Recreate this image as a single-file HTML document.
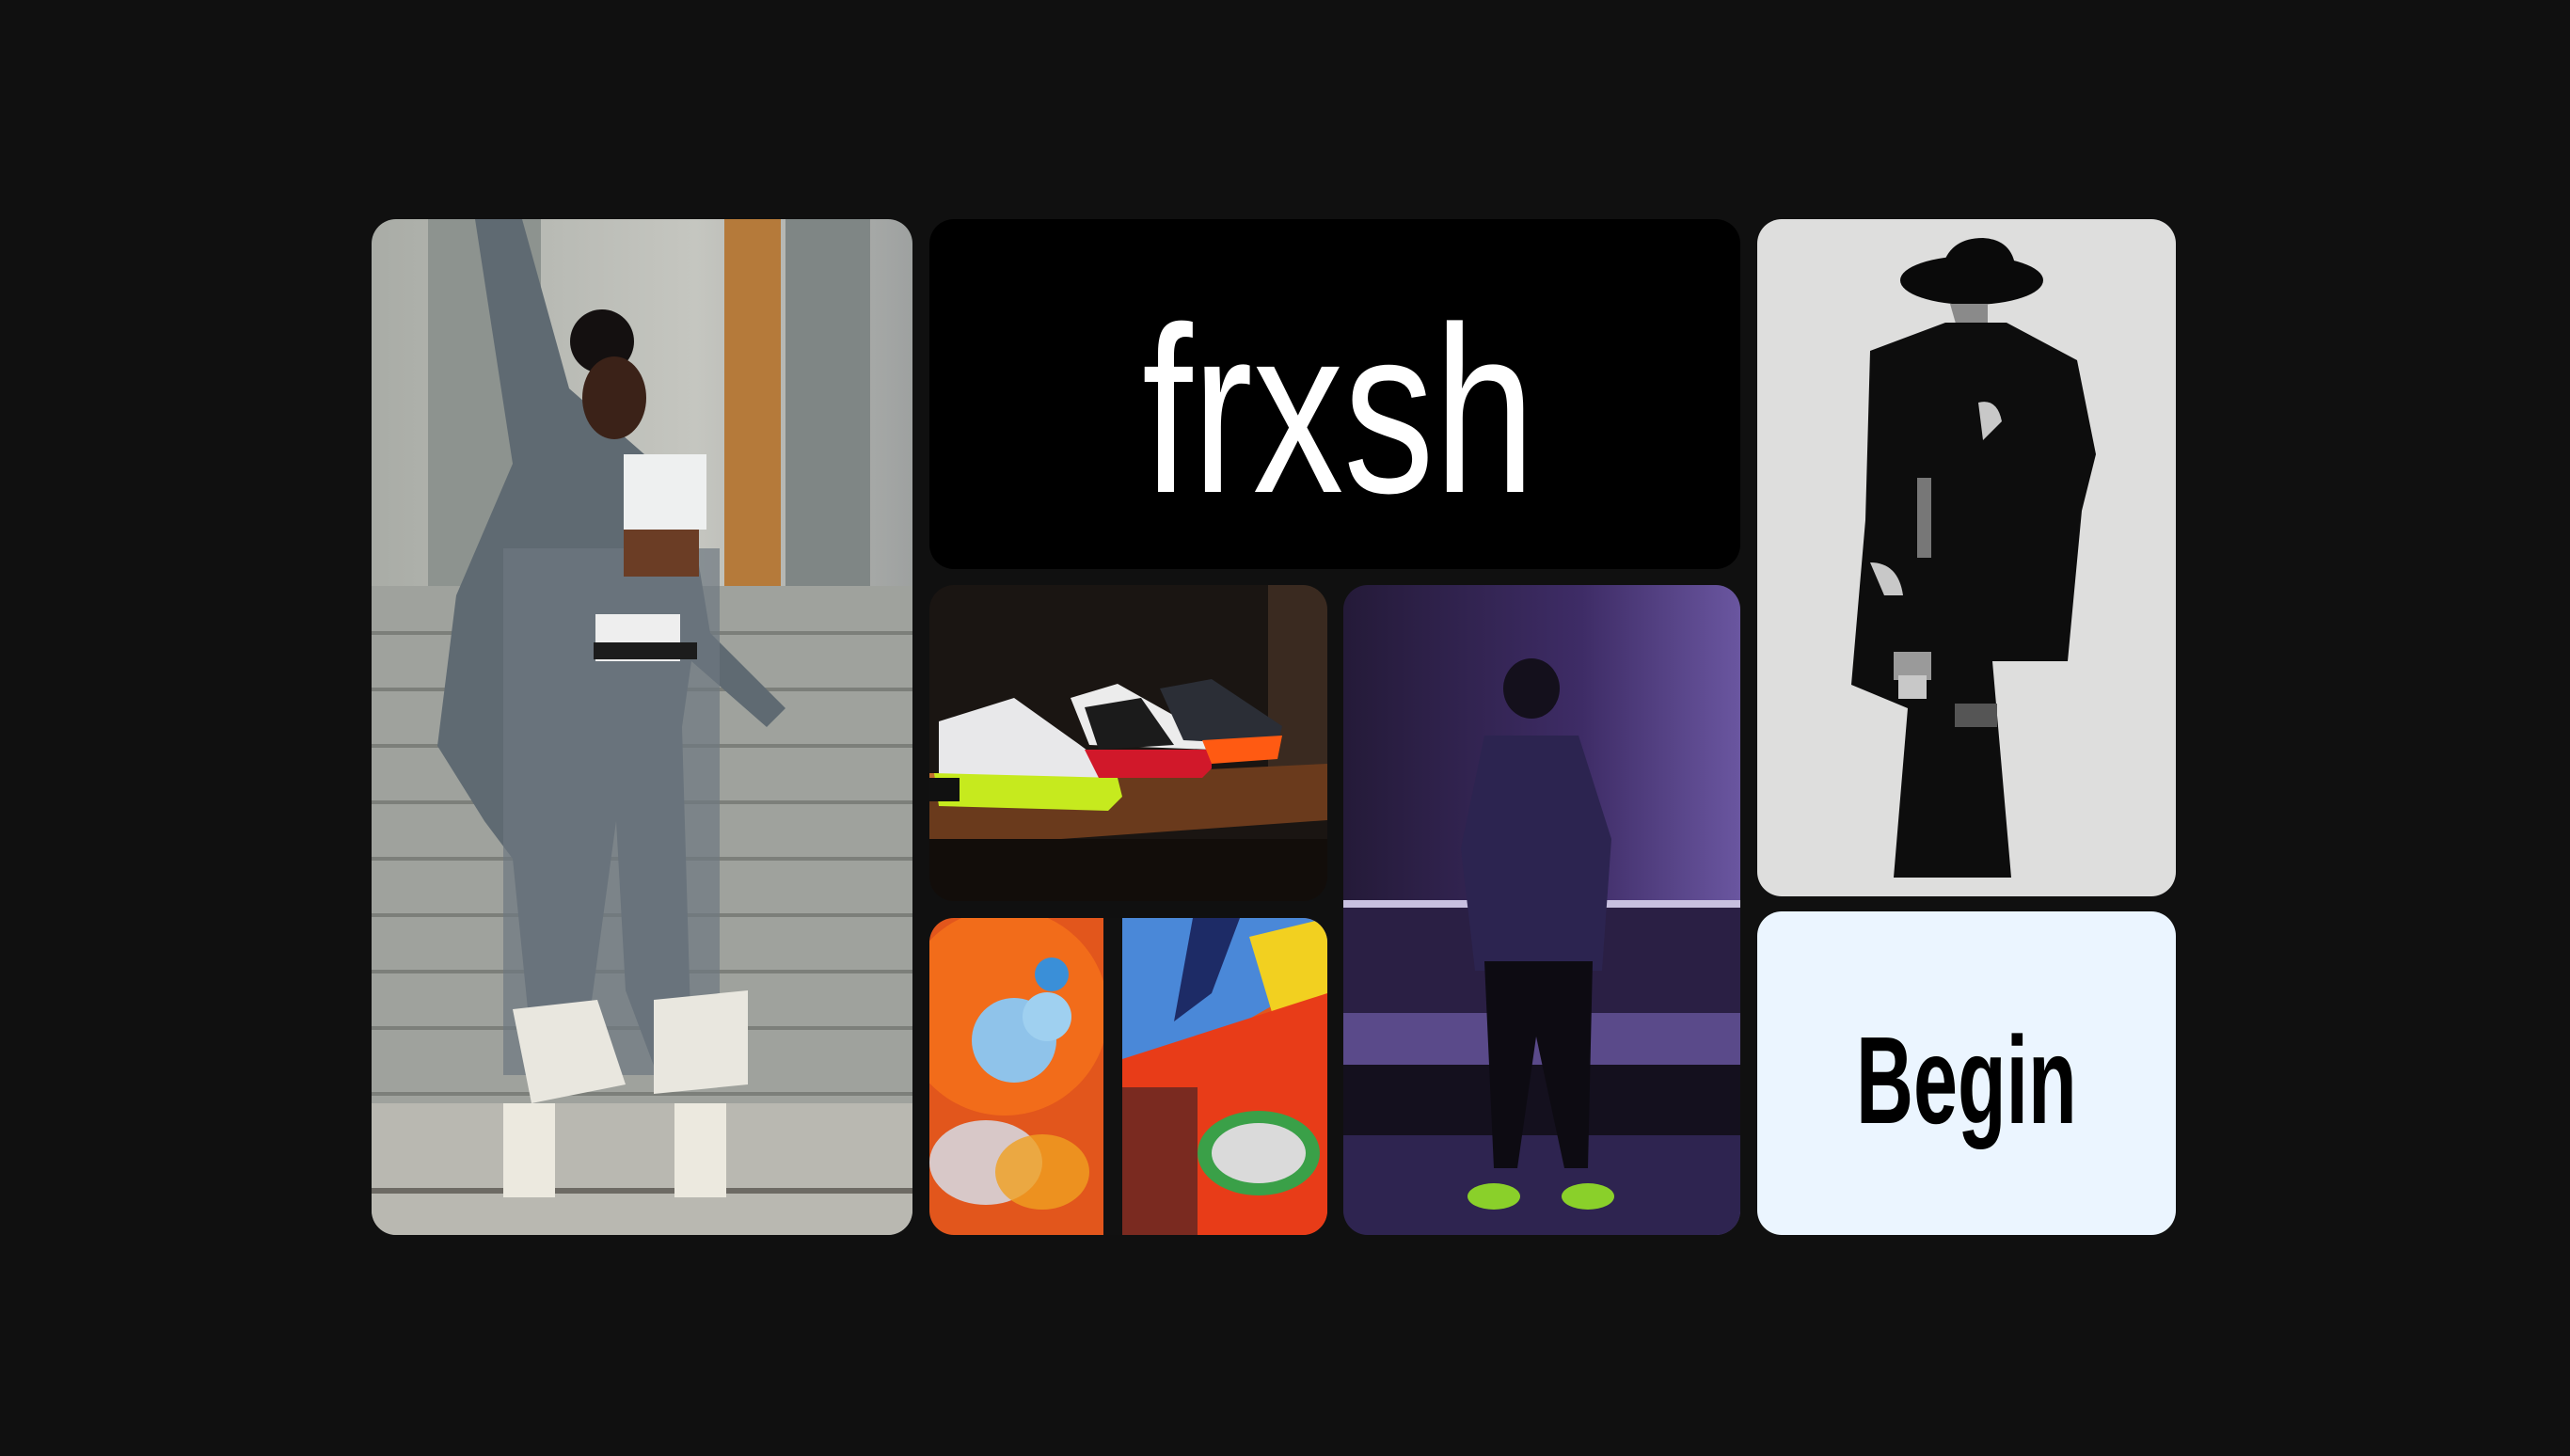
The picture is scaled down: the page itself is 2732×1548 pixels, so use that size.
<!DOCTYPE html>
<html><head><meta charset="utf-8"><style>
html,body{margin:0;padding:0;background:#101010;width:2732px;height:1548px;overflow:hidden}
.c{position:absolute;overflow:hidden;border-radius:26px}
.c svg{display:block}
.t{font-family:"Liberation Sans Narrow","Liberation Sans",sans-serif;position:absolute;white-space:nowrap}
</style></head><body>

<div class="c" style="left:395px;top:233px;width:575px;height:1080px">
<svg width="575" height="1080" viewBox="0 0 575 1080">
<defs><linearGradient id="wall" x1="0" y1="0" x2="1" y2="0"><stop offset="0" stop-color="#a9aca6"/><stop offset=".6" stop-color="#c5c6c0"/><stop offset="1" stop-color="#9ea1a0"/></linearGradient></defs>
<rect width="575" height="1080" fill="url(#wall)"/>
<rect x="60" y="0" width="120" height="420" fill="#8d938f"/>
<rect x="375" y="0" width="60" height="400" fill="#b57a3a"/>
<rect x="440" y="0" width="90" height="390" fill="#7f8685"/>
<rect x="0" y="390" width="575" height="600" fill="#9fa29d"/>
<g stroke="#7c7f7a" stroke-width="4">
<line x1="0" y1="440" x2="575" y2="440"/><line x1="0" y1="500" x2="575" y2="500"/><line x1="0" y1="560" x2="575" y2="560"/><line x1="0" y1="620" x2="575" y2="620"/><line x1="0" y1="680" x2="575" y2="680"/><line x1="0" y1="740" x2="575" y2="740"/><line x1="0" y1="800" x2="575" y2="800"/><line x1="0" y1="860" x2="575" y2="860"/><line x1="0" y1="930" x2="575" y2="930"/></g>
<rect x="0" y="940" width="575" height="140" fill="#b9b8b1"/>
<rect x="0" y="1030" width="575" height="6" fill="#6d6a64"/>
<path d="M110 0 L160 0 L210 180 L290 250 L330 260 L360 440 L440 520 L420 540 L340 470 L330 540 L340 880 L300 900 L270 820 L260 640 L230 860 L170 880 L150 680 L120 640 L70 560 L90 400 L120 330 L150 260 Z" fill="#5f6a72"/>
<rect x="140" y="350" width="230" height="560" fill="#6d7780" opacity=".7"/>
<circle cx="245" cy="130" r="34" fill="#141010"/>
<ellipse cx="258" cy="190" rx="34" ry="44" fill="#3b2218"/>
<rect x="268" y="250" width="88" height="80" fill="#eef0f0"/>
<rect x="268" y="330" width="80" height="50" fill="#6b3d25"/>
<rect x="238" y="420" width="90" height="50" fill="#eeeeee"/>
<rect x="236" y="450" width="110" height="18" fill="#1c1c1c"/>
<path d="M150 840 L240 830 L270 920 L170 940 Z" fill="#e9e7df"/>
<path d="M300 830 L400 820 L400 920 L300 930 Z" fill="#e9e7df"/>
<rect x="140" y="940" width="55" height="100" fill="#ece9df"/>
<rect x="322" y="940" width="55" height="100" fill="#ece9df"/>
</svg></div>

<div class="c" style="left:988px;top:233px;width:862px;height:372px;background:#000">
<div class="t" style="left:226px;top:78px;font-size:252px;line-height:252px;color:#fff;transform:scaleX(.765);transform-origin:0 0">frxsh</div>
</div>

<div class="c" style="left:988px;top:622px;width:423px;height:336px">
<svg width="423" height="336" viewBox="0 0 423 336">
<rect width="423" height="336" fill="#1a1512"/>
<rect x="360" y="0" width="63" height="200" fill="#3a2a20"/>
<rect x="0" y="200" width="423" height="20" fill="#c4702f"/>
<path d="M0 210 L423 190 L423 250 L0 280 Z" fill="#6a3a1c"/>
<rect x="0" y="270" width="423" height="66" fill="#120d0a"/>
<path d="M10 145 L90 120 L160 170 L200 200 L200 225 L10 230 Z" fill="#e8e8ea"/>
<path d="M5 200 L200 205 L205 225 L190 240 L10 235 Z" fill="#c6ea1e"/>
<rect x="0" y="205" width="32" height="25" fill="#111"/>
<path d="M150 120 L200 105 L280 150 L300 175 L170 170 Z" fill="#ececec"/>
<path d="M165 130 L225 120 L260 170 L180 175 Z" fill="#1b1b1b"/>
<path d="M165 175 L300 175 L300 195 L290 205 L180 205 Z" fill="#d1182a"/>
<path d="M245 110 L300 100 L375 150 L370 170 L270 165 Z" fill="#2b2e36"/>
<path d="M290 165 L375 160 L370 185 L300 190 Z" fill="#ff5a12"/>
</svg></div>

<div class="c" style="left:988px;top:976px;width:423px;height:337px">
<svg width="423" height="337" viewBox="0 0 423 337">
<rect width="423" height="337" fill="#e2561c"/>
<circle cx="80" cy="100" r="110" fill="#f26c1a"/>
<circle cx="90" cy="130" r="45" fill="#8fc3ea"/>
<circle cx="130" cy="60" r="18" fill="#3a8fd8"/>
<circle cx="125" cy="105" r="26" fill="#9fd0f0"/>
<rect x="185" y="0" width="20" height="337" fill="#111"/>
<path d="M205 0 L423 0 L423 60 L300 130 L205 150 Z" fill="#4a88d8"/>
<path d="M280 0 L330 0 L300 80 L260 110 Z" fill="#1d2b66"/>
<path d="M340 20 L423 0 L423 90 L370 120 Z" fill="#f2d020"/>
<path d="M205 150 L423 80 L423 337 L205 337 Z" fill="#e83c18"/>
<rect x="205" y="180" width="80" height="157" fill="#7a2a20"/>
<ellipse cx="60" cy="260" rx="60" ry="45" fill="#d8c8c8"/>
<ellipse cx="120" cy="270" rx="50" ry="40" fill="#f0a020" opacity=".8"/>
<ellipse cx="350" cy="250" rx="65" ry="45" fill="#3aa048"/>
<ellipse cx="350" cy="250" rx="50" ry="32" fill="#dadada"/>
</svg></div>

<div class="c" style="left:1428px;top:622px;width:422px;height:691px">
<svg width="422" height="691" viewBox="0 0 422 691">
<defs><linearGradient id="pg" x1="0" y1="0" x2="1" y2="0"><stop offset="0" stop-color="#241a38"/><stop offset=".6" stop-color="#3e2c66"/><stop offset="1" stop-color="#6a56a0"/></linearGradient></defs>
<rect width="422" height="691" fill="url(#pg)"/>
<rect x="0" y="335" width="422" height="8" fill="#c8c0e0"/>
<rect x="0" y="343" width="422" height="120" fill="#2a1f44"/>
<rect x="0" y="455" width="422" height="60" fill="#5a4a8a"/>
<rect x="0" y="510" width="422" height="75" fill="#14101e"/>
<rect x="0" y="585" width="422" height="106" fill="#2e2450"/>
<ellipse cx="200" cy="110" rx="30" ry="32" fill="#14101c"/>
<path d="M150 160 L250 160 L285 270 L275 410 L140 410 L125 280 Z" fill="#2c2450"/>
<path d="M150 400 L265 400 L260 620 L235 620 L205 480 L185 620 L160 620 Z" fill="#0d0b12"/>
<ellipse cx="160" cy="650" rx="28" ry="14" fill="#8ad02a"/>
<ellipse cx="260" cy="650" rx="28" ry="14" fill="#8ad02a"/>
</svg></div>

<div class="c" style="left:1868px;top:233px;width:445px;height:720px">
<svg width="445" height="720" viewBox="0 0 445 720">
<rect width="445" height="720" fill="#dededd"/>
<ellipse cx="228" cy="65" rx="76" ry="26" fill="#0a0a0a"/>
<path d="M195 60 Q200 20 240 20 Q275 22 275 60 Z" fill="#0a0a0a"/>
<path d="M205 90 L245 90 L245 125 L215 125 Z" fill="#8a8a8a"/>
<path d="M120 140 L200 110 L265 110 L340 150 L360 250 L345 310 L330 470 L250 470 L270 700 L145 700 L160 520 L100 495 L115 320 Z" fill="#0d0d0d"/>
<rect x="145" y="460" width="40" height="30" fill="#9a9a9a"/>
<rect x="150" y="485" width="30" height="25" fill="#c8c8c8"/>
<rect x="210" y="515" width="45" height="25" fill="#555"/>
<rect x="170" y="275" width="15" height="85" fill="#777"/>
<path d="M235 195 Q255 190 260 215 L240 235 Z" fill="#c8c8c8"/>
<path d="M120 365 Q150 365 155 400 L135 400 Z" fill="#c8c8c8"/>
</svg></div>

<div class="c" style="left:1868px;top:969px;width:445px;height:344px;background:#ebf5ff">
<div class="t" style="left:105px;top:114px;font-size:132px;line-height:132px;font-weight:bold;color:#000;transform:scaleX(.64);transform-origin:0 0">Begin</div>
</div>

</body></html>
